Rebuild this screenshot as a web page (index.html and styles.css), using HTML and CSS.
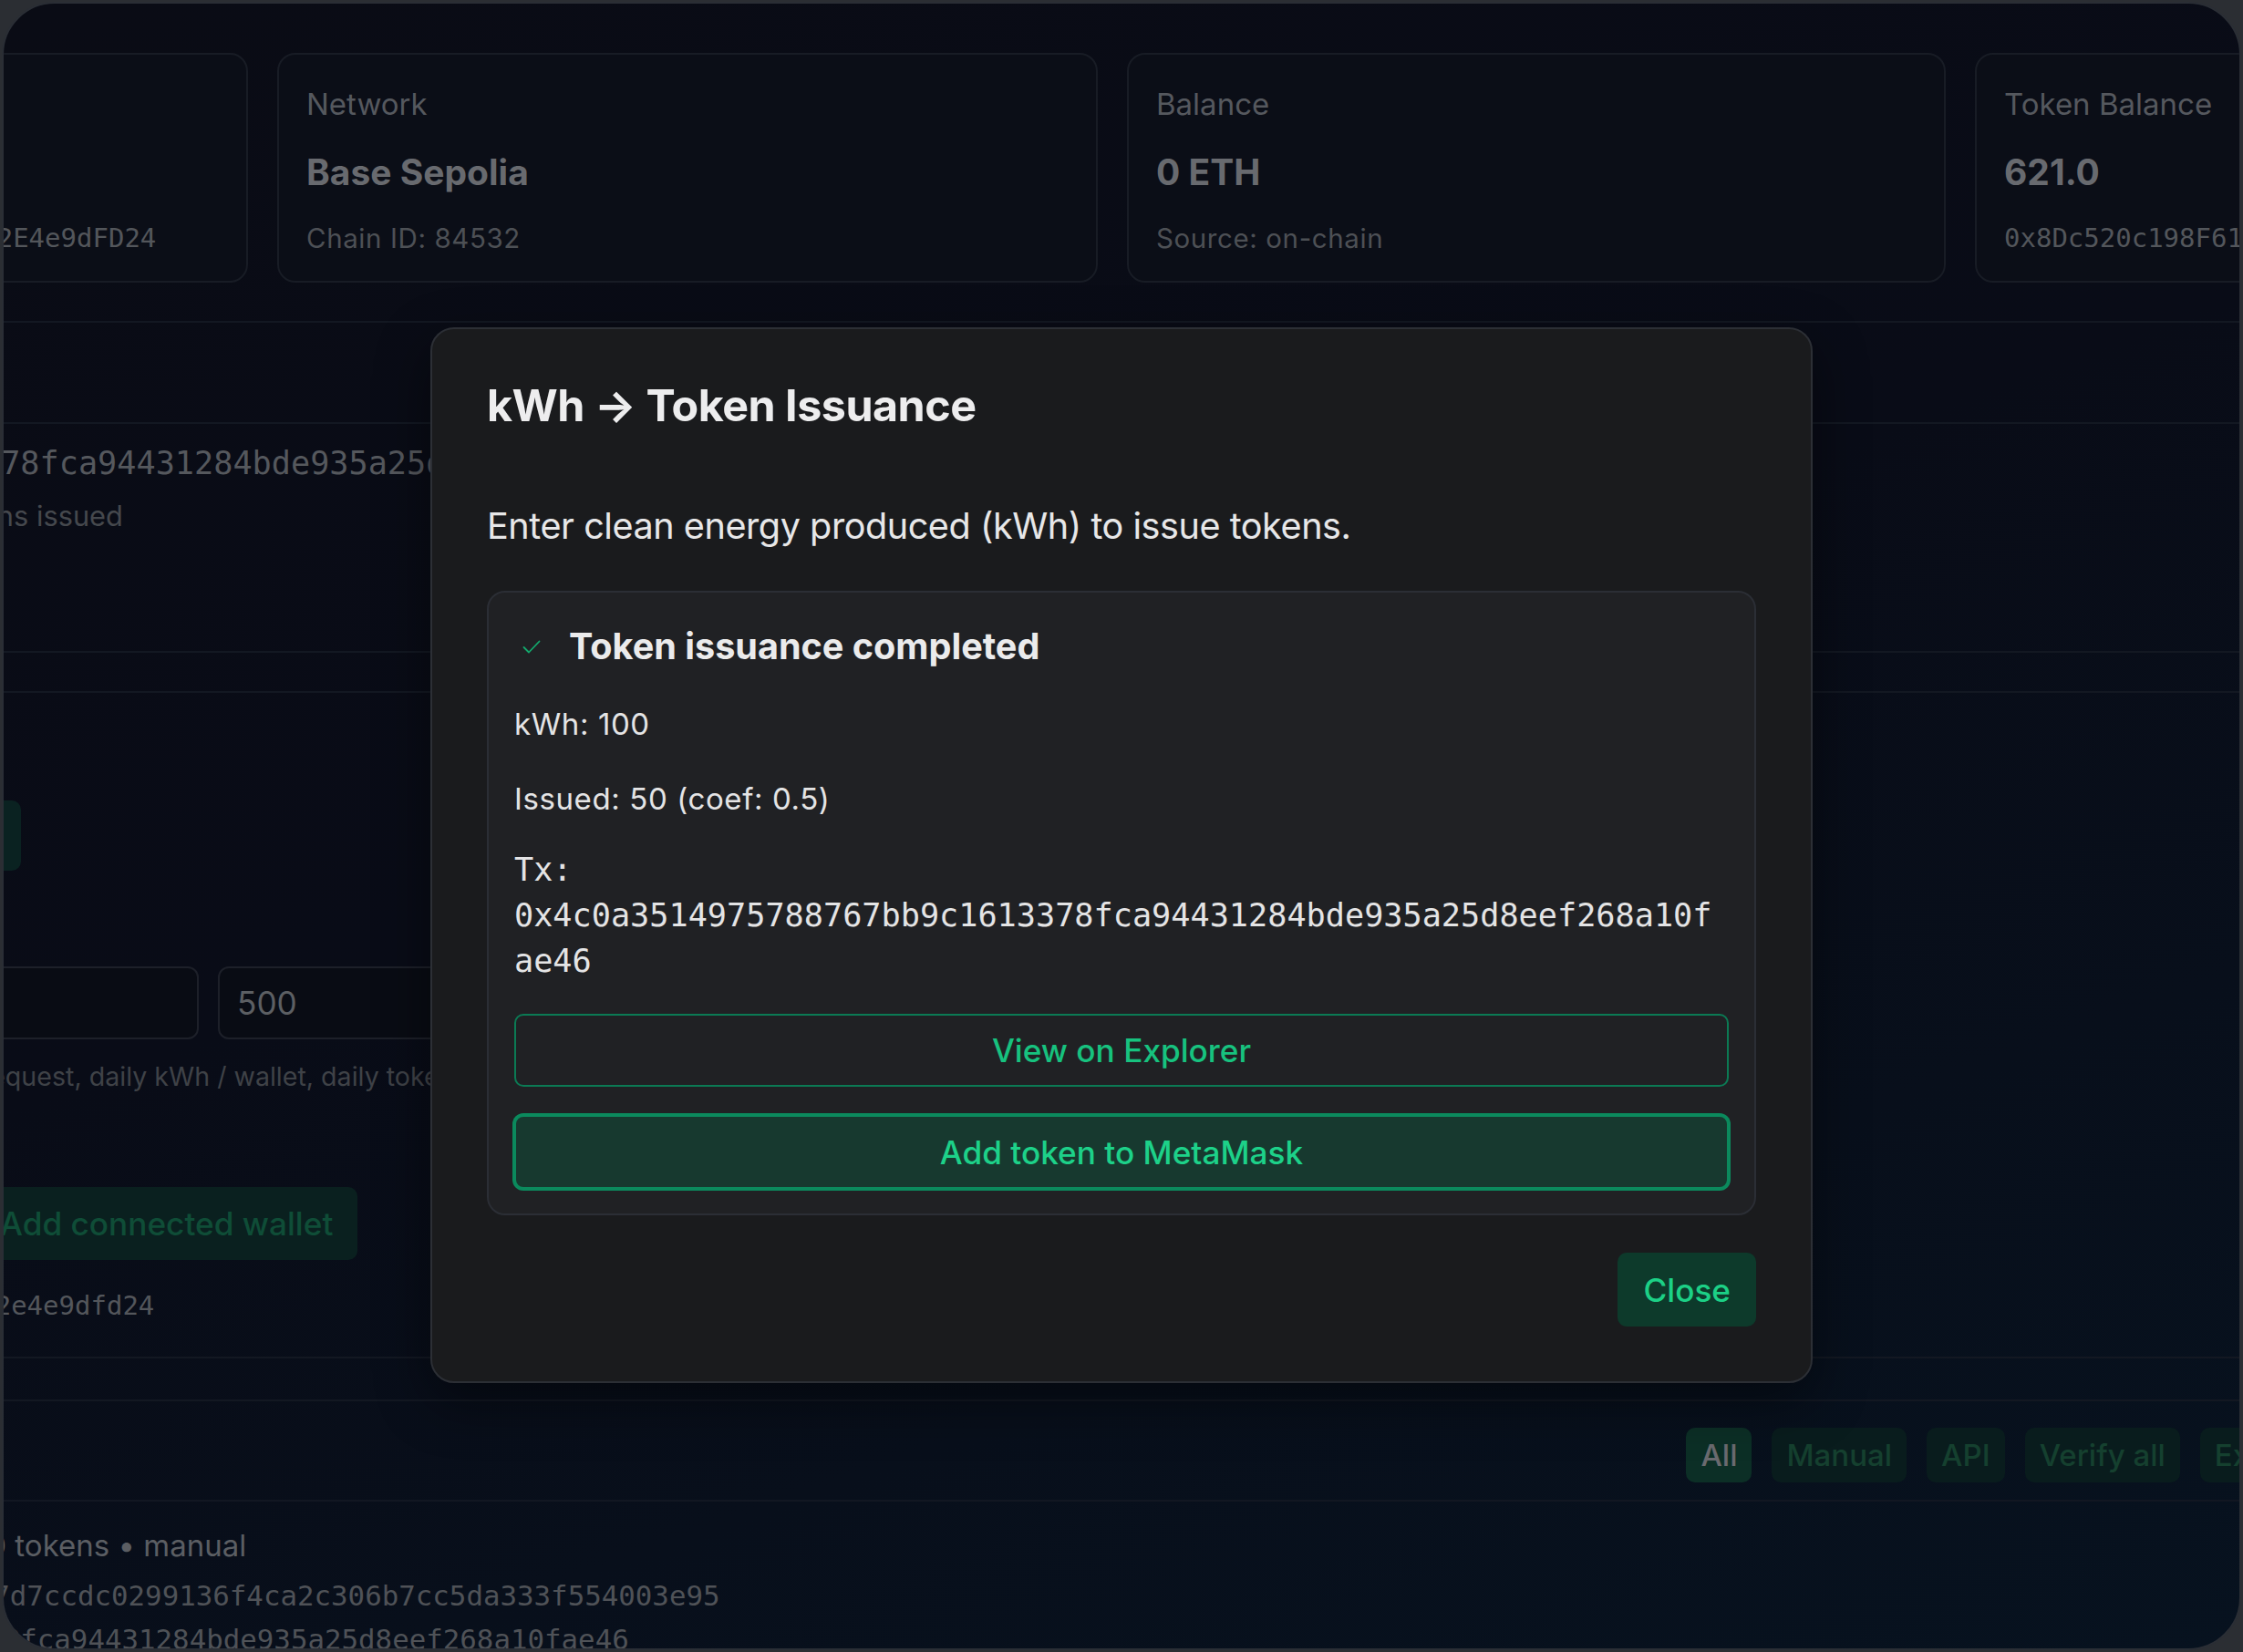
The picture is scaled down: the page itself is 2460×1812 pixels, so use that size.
FILE: index.html
```html
<!DOCTYPE html>
<html lang="en">
<head>
<meta charset="utf-8">
<title>kWh → Token Issuance</title>
<link rel="stylesheet" href="styles.css">
</head>
<body>
<div class="window">
  <div class="page">
    <div class="cards">
      <div class="card">
        <div class="card-label">Wallet</div>
        <div class="card-value">Connected</div>
        <div class="card-mono">0x7A3b91C0d5E2f8a4B6c1D9e0F3a5b72E4e9dFD24</div>
      </div>
      <div class="card">
        <div class="card-label">Network</div>
        <div class="card-value">Base Sepolia</div>
        <div class="card-sub">Chain ID: 84532</div>
      </div>
      <div class="card">
        <div class="card-label">Balance</div>
        <div class="card-value">0 ETH</div>
        <div class="card-sub">Source: on-chain</div>
      </div>
      <div class="card">
        <div class="card-label">Token Balance</div>
        <div class="card-value">621.0</div>
        <div class="card-mono">0x8Dc520c198F61bA4E3c7d1E9a0B5f2C86d3e4A17</div>
      </div>
    </div>

    <section class="panel panel-last">
      <div class="panel-head"><h3 class="panel-title">Latest issuance</h3></div>
      <div class="last-body">
        <div class="last-hash">0x4c0a3514975788767bb9c1613378fca94431284bde935a25d8eef268a10fae46</div>
        <div class="last-note">Energy: 100 kWh verified today · 50 tokens issued</div>
      </div>
    </section>

    <section class="panel panel-form">
      <button class="issue-btn" type="button">Issue tokens</button>
      <div class="limit-row">
        <div class="field">1000</div>
        <div class="field">500</div>
        <div class="field">250</div>
      </div>
      <div class="helper">Rate limits (enter 0 for unlimited): kWh / request, daily kWh / wallet, daily tokens / wallet</div>
      <div class="wallet-row">
        <div class="field field-wallet">0x…</div>
        <button class="add-wallet" type="button">Add connected wallet</button>
      </div>
      <div class="wallet-mono">0x7a3b91c0d5e2f8a4b6c1d9e0f3a5b72e4e9dfd24</div>
    </section>

    <section class="panel panel-history">
      <div class="history-head">
        <div class="tabs">
          <span class="tab tab-active">All</span>
          <span class="tab">Manual</span>
          <span class="tab">API</span>
          <span class="tab">Verify all</span>
          <span class="tab">Export</span>
        </div>
      </div>
      <div class="history-item">
        <div class="history-meta">2025-01-14 12:03:41 · 100 kWh → 50 tokens • manual</div>
        <div class="history-mono">Payload: 9b2e41a0c7d35f86e1abf7d7ccdc0299136f4ca2c306b7cc5da333f554003e95</div>
        <div class="history-mono history-tx">0x4c0a3514975788767bb9c1613378fca94431284bde935a25d8eef268a10fae46</div>
      </div>
    </section>
  </div>

  <div class="backdrop">
    <div class="modal" role="dialog" aria-modal="true">
      <h2 class="modal-title">kWh → Token Issuance</h2>
      <p class="modal-sub">Enter clean energy produced (kWh) to issue tokens.</p>
      <div class="result">
        <div class="result-head">
          <svg class="check" width="20" height="17" viewBox="0 0 20 17" aria-hidden="true"><polyline points="1.5,9 7,14.5 18.5,2.5" fill="none" stroke="#13a86c" stroke-width="1.8" stroke-linecap="round" stroke-linejoin="round"/></svg>
          <span>Token issuance completed</span>
        </div>
        <p class="row row-kwh">kWh: 100</p>
        <p class="row row-issued">Issued: 50 (coef: 0.5)</p>
        <div class="tx">Tx: 0x4c0a3514975788767bb9c1613378fca94431284bde935a25d8eef268a10fae46</div>
        <button class="btn btn-outline" type="button">View on Explorer</button>
        <button class="btn btn-primary" type="button">Add token to MetaMask</button>
      </div>
      <div class="modal-foot">
        <button class="btn-close" type="button">Close</button>
      </div>
    </div>
  </div>
</div>
</body>
</html>
```

FILE: styles.css
```css
html, body {
  margin: 0;
  padding: 0;
}
body {
  width: 2460px;
  height: 1812px;
  overflow: hidden;
  background: #2b2e33;
  font-family: Inter, "Noto Sans", "Liberation Sans", sans-serif;
}
button {
  font-family: inherit;
}

.window {
  box-sizing: border-box;
  position: relative;
  margin: 2px 2px 0 2px;
  height: 1808px;
  border: 2px solid #2a2e35;
  border-radius: 58px;
  overflow: hidden;
  background: linear-gradient(160deg, #0a0c15 0%, #090c17 45%, #07121f 100%);
}

.page {
  margin-left: -598px;
  width: 3172px;
  padding-top: 54px;
}

/* cards */
.cards {
  display: grid;
  grid-template-columns: 866px 900px 898px 900px;
  gap: 32px;
}
.card {
  box-sizing: border-box;
  height: 252px;
  padding: 34px 30px 0;
  border: 2px solid #181c25;
  border-radius: 20px;
  background: #0b0e17;
}
.card-label {
  font-size: 33px;
  line-height: 40px;
  color: #55585e;
}
.card-value {
  margin-top: 32px;
  font-size: 39px;
  line-height: 46px;
  font-weight: 700;
  color: #686a6f;
}
.card-sub {
  margin-top: 30px;
  font-size: 29.5px;
  line-height: 38px;
  letter-spacing: 0.6px;
  color: #4d5055;
}
.card-mono {
  margin-top: 30px;
  font-family: "DejaVu Sans Mono", "Liberation Mono", monospace;
  font-size: 29px;
  line-height: 38px;
  color: #53565b;
  white-space: nowrap;
}

/* panels */
.panel {
  border-top: 2px solid #131822;
  border-bottom: 2px solid #131822;
}
.panel-last {
  margin-top: 42px;
  height: 364px;
  box-sizing: border-box;
}
.panel-head {
  height: 109px;
  border-bottom: 2px solid #131822;
  padding: 0 30px;
  display: flex;
  align-items: center;
}
.panel-title {
  margin: 0;
  font-size: 37px;
  font-weight: 600;
  color: #5f6166;
}
.last-body {
  padding: 18px 0 0 2px;
}
.last-hash {
  font-family: "DejaVu Sans Mono", "Liberation Mono", monospace;
  font-size: 35.2px;
  line-height: 50px;
  color: #55585d;
  white-space: nowrap;
}
.last-note {
  margin-top: 13px;
  font-size: 30.8px;
  line-height: 40px;
  color: #45484d;
  white-space: nowrap;
}

.panel-form {
  margin-top: 42px;
  box-sizing: border-box;
  height: 732px;
  padding: 118px 30px 0;
}
.issue-btn {
  display: block;
  width: 587px;
  height: 77px;
  border: none;
  border-radius: 10px;
  background: #0a2221;
  color: #0f4a38;
  font-size: 35.2px;
  font-weight: 500;
}
.limit-row {
  margin-top: 105px;
  display: grid;
  grid-template-columns: 782px 782px 782px;
  gap: 21px;
}
.field {
  box-sizing: border-box;
  height: 80px;
  padding: 0 19px;
  border: 2px solid #1d2029;
  border-radius: 12px;
  background: #090c14;
  display: flex;
  align-items: center;
  font-size: 35.2px;
  color: #5c5f63;
}
.helper {
  margin-top: 21px;
  font-size: 28.6px;
  line-height: 40px;
  color: #3f4247;
  white-space: nowrap;
}
.wallet-row {
  margin-top: 101px;
  display: flex;
  gap: 20px;
}
.field-wallet {
  flex: 0 0 517px;
  color: #2f3237;
}
.add-wallet {
  height: 80px;
  padding: 0 27px;
  border: none;
  border-radius: 10px;
  background: #0a201f;
  color: #0f4d37;
  font-size: 35.2px;
  font-weight: 500;
  white-space: nowrap;
}
.wallet-mono {
  margin-top: 30px;
  font-family: "DejaVu Sans Mono", "Liberation Mono", monospace;
  font-size: 29px;
  line-height: 40px;
  color: #53565b;
  white-space: nowrap;
}

.panel-history {
  margin-top: 45px;
  border-bottom: none;
}
.history-head {
  padding: 29px 30px 19px;
  border-bottom: 2px solid #121722;
  display: flex;
  justify-content: flex-end;
}
.tabs {
  display: flex;
  gap: 22px;
}
.tab {
  height: 60px;
  padding: 0 16px;
  border-radius: 10px;
  display: flex;
  align-items: center;
  font-size: 33px;
  font-weight: 500;
  background: #091c1d;
  color: #15402f;
}
.tab-active {
  background: #0c2f26;
  color: #6a6a6f;
}
.history-item {
  padding: 28px 30px 0;
}
.history-meta {
  font-size: 33px;
  line-height: 40px;
  color: #5b5e63;
  white-space: nowrap;
}
.history-mono {
  font-family: "DejaVu Sans Mono", "Liberation Mono", monospace;
  font-size: 30.8px;
  line-height: 48px;
  color: #4f5257;
  white-space: nowrap;
}
.history-meta + .history-mono {
  margin-top: 11px;
}
.history-tx {
  padding-left: 30px;
}

/* modal */
.backdrop {
  position: absolute;
  inset: 0;
}
.modal {
  box-sizing: border-box;
  width: 1516px;
  margin: 355px 0 0 468px;
  padding: 55px 60px 60px;
  border: 2px solid #2c2f35;
  border-radius: 26px;
  background: #1a1b1d;
  box-shadow: 0 20px 60px rgba(0, 0, 0, 0.45);
}
.modal-title {
  margin: 0;
  font-size: 48.4px;
  line-height: 58px;
  font-weight: 700;
  letter-spacing: -0.5px;
  color: #ededee;
}
.modal-sub {
  margin: 79px 0 0;
  font-size: 39.6px;
  line-height: 48px;
  letter-spacing: -0.45px;
  color: #e7e7e8;
}
.result {
  margin-top: 47px;
  padding: 30px 28px 27px;
  border: 2px solid #2b2e35;
  border-radius: 20px;
  background: #202124;
}
.result-head {
  display: flex;
  align-items: center;
  gap: 31px;
  font-size: 39.6px;
  line-height: 58px;
  font-weight: 700;
  color: #ebebec;
}
.check {
  margin-left: 9px;
  flex: none;
}
.row {
  margin: 0;
  font-size: 33px;
  line-height: 50px;
  letter-spacing: 0.6px;
  color: #e4e4e5;
}
.row-kwh { margin-top: 31px; }
.row-issued { margin-top: 32px; }
.tx {
  margin-top: 28px;
  font-family: "DejaVu Sans Mono", "Liberation Mono", monospace;
  font-size: 35.2px;
  line-height: 50px;
  color: #e4e4e5;
  overflow-wrap: anywhere;
}
.btn {
  display: flex;
  align-items: center;
  justify-content: center;
  width: 100%;
  box-sizing: border-box;
  border-radius: 10px;
  font-size: 35.2px;
  font-weight: 500;
}
.btn-outline {
  margin-top: 33px;
  height: 80px;
  border: 2px solid #0b7a54;
  background: transparent;
  color: #17c27f;
}
.btn-primary {
  margin-top: 31px;
  height: 81px;
  border: 2px solid #0b8a5d;
  box-shadow: 0 0 0 2px #0b8a5d;
  background: #17392f;
  color: #1dd189;
}
.modal-foot {
  margin-top: 41px;
  display: flex;
  justify-content: flex-end;
}
.btn-close {
  height: 81px;
  padding: 0 28px;
  border: none;
  border-radius: 10px;
  background: #0d3a2b;
  color: #1cd086;
  font-size: 35.2px;
  font-weight: 500;
}
```
